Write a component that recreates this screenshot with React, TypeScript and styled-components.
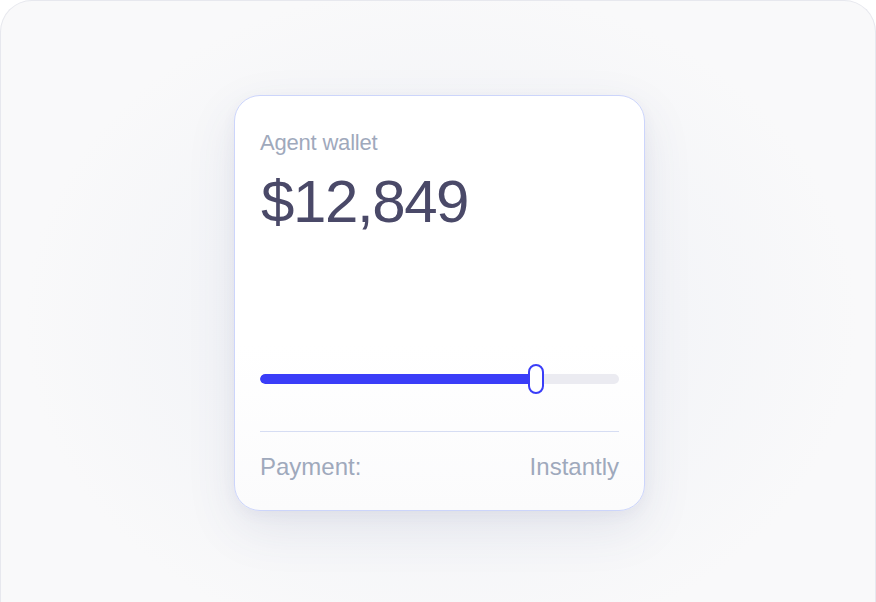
import React from "react";
import styled, { createGlobalStyle } from "styled-components";

const Global = createGlobalStyle`
  html, body {
    margin: 0;
    padding: 0;
    background: #ffffff;
    overflow: hidden;
  }
  body {
    font-family: "Liberation Sans", Arial, sans-serif;
  }
`;

const Stage = styled.div`
  box-sizing: border-box;
  width: 876px;
  height: 602px;
  border: 1px solid #e7e8ee;
  border-bottom: none;
  border-radius: 32px 32px 0 0;
  background: radial-gradient(ellipse 520px 420px at 440px 320px, #eef0f5 0%, #f4f5f8 45%, #f9f9fa 80%);
  display: flex;
  justify-content: center;
  padding-top: 94px;
  padding-left: 3px;
`;

const Card = styled.div`
  box-sizing: border-box;
  width: 411px;
  height: 416px;
  border: 1px solid #ccd5fb;
  border-radius: 26px;
  background: linear-gradient(180deg, #ffffff 0%, #ffffff 60%, #fbfbfc 100%);
  box-shadow: 0 18px 50px rgba(70, 80, 130, 0.10), 0 4px 14px rgba(70, 80, 130, 0.05);
  padding: 34px 25px 28px 25px;
  display: flex;
  flex-direction: column;
`;

const Label = styled.div`
  font-size: 22px;
  line-height: 26px;
  letter-spacing: -0.2px;
  color: #9fa9bc;
`;

const Amount = styled.div`
  margin-top: 12px;
  margin-left: 1px;
  font-size: 60px;
  line-height: 68px;
  letter-spacing: -1.4px;
  color: #4a4968;
`;

const SliderWrap = styled.div`
  position: relative;
  margin-top: 128px;
  height: 30px;
  display: flex;
  align-items: center;
`;

const Track = styled.div`
  position: relative;
  width: 100%;
  height: 10px;
  border-radius: 5px;
  background: #ebebf1;
  overflow: hidden;
`;

const Fill = styled.div`
  height: 100%;
  border-radius: 5px 0 0 5px;
  background: #3a3df8;
`;

const Thumb = styled.div`
  position: absolute;
  top: 0;
  box-sizing: border-box;
  width: 16px;
  height: 30px;
  margin-left: -8px;
  border: 2px solid #3a3df8;
  border-radius: 8px;
  background: #ffffff;
`;

const Divider = styled.div`
  margin-top: 37px;
  height: 1px;
  background: #d6ddf3;
`;

const Footer = styled.div`
  margin-top: 21px;
  display: flex;
  justify-content: space-between;
  font-size: 24px;
  line-height: 28px;
  color: #9fa9bc;
`;

export default function App() {
  const value = 76.9;
  return (
    <>
      <Global />
      <Stage>
        <Card>
          <Label>Agent wallet</Label>
          <Amount>$12,849</Amount>
          <SliderWrap>
            <Track>
              <Fill style={{ width: `${value}%` }} />
            </Track>
            <Thumb style={{ left: `${value}%` }} />
          </SliderWrap>
          <Divider />
          <Footer>
            <span>Payment:</span>
            <span>Instantly</span>
          </Footer>
        </Card>
      </Stage>
    </>
  );
}
